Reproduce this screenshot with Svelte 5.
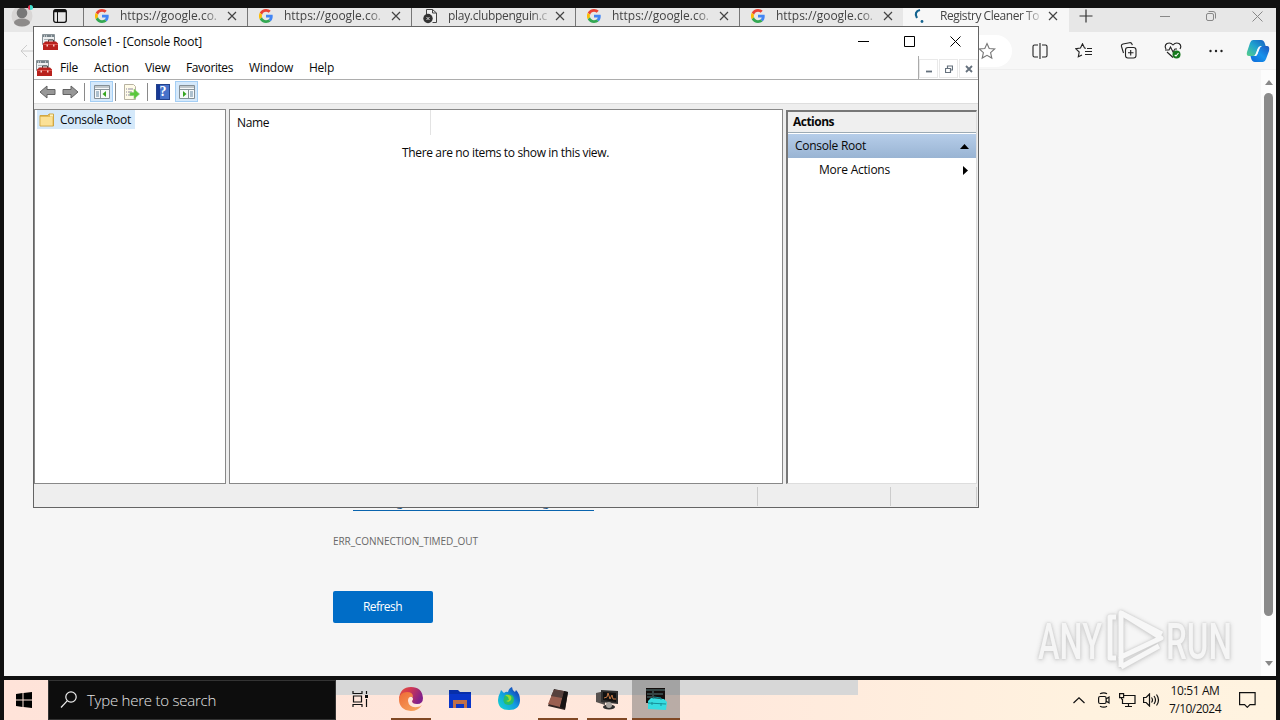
<script lang="ts">
type Tab = { title: string; icon: "google" | "blocked" | "spinner"; width: number; active?: boolean };

const tabs: Tab[] = [
    { title: "https://google.co.", icon: "google", width: 97 },
    { title: "https://google.co.", icon: "google", width: 97 },
    { title: "play.clubpenguin.c", icon: "blocked", width: 99 },
    { title: "https://google.co.", icon: "google", width: 97 },
    { title: "https://google.co.", icon: "google", width: 97 },
    { title: "Registry Cleaner To", icon: "spinner", width: 99, active: true },
];

const menus = [
    { label: "File", width: 18 },
    { label: "Action", width: 35 },
    { label: "View", width: 25 },
    { label: "Favorites", width: 47 },
    { label: "Window", width: 44 },
    { label: "Help", width: 25 },
];

// Spreads a label over a fixed advance width by adjusting its tracking.
function track(node: HTMLElement, width: number) {
    const count = (node.textContent ?? "").trim().length;
    const natural = node.getBoundingClientRect().width;
    node.style.letterSpacing = `${(width - natural) / count}px`;
}
</script>

{#snippet google()}
    <svg width="14" height="14" viewBox="0 0 48 48">
        <path fill="#ea4335" d="M24 9.5c3.5 0 6.700 1.200 9.200 3.600l6.900-6.900C35.900 2.400 30.500 0 24 0 14.600 0 6.500 5.400 2.600 13.200l8 6.200C12.400 13.700 17.700 9.500 24 9.500z" />
        <path fill="#4285f4" d="M47 24.500c0-1.600-.2-3.100-.4-4.500H24v9h12.900c-.6 3-2.300 5.500-4.800 7.200l7.700 6C44.400 38 47 31.800 47 24.500z" />
        <path fill="#fbbc05" d="M10.500 28.600a14.500 14.500 0 0 1 0-9.200l-8-6.200a24 24 0 0 0 0 21.600z" />
        <path fill="#34a853" d="M24 48c6.500 0 11.900-2.100 15.900-5.800l-7.700-6c-2.200 1.500-4.900 2.300-8.200 2.300-6.300 0-11.600-4.200-13.500-9.900l-8 6.200C6.500 42.600 14.600 48 24 48z" />
    </svg>
{/snippet}

{#snippet toolbox()}
    <svg width="16" height="16" viewBox="0 0 16 16">
        <path d="M.5.500h12v10H.500z" fill="#eef0f1" stroke="#8b9499" />
        <path d="M1 1h11v2H1z" fill="#77838a" />
        <path d="M2 2h1m1 0h1m4 0h1" stroke="#fff" />
        <path d="M2 5.500h9M2 8h3" stroke="#a9b3b8" />
        <path d="M6.500 8V6h5v2" fill="none" stroke="#444" />
        <path d="M1 9.500L3.500 7.500H14L16 9.500V16H1z" fill="#b8211d" />
        <path d="M1.500 10.500H16" stroke="#df514a" />
        <path d="M4.500 10.500h1.500v2H4.500zm6.500 0h1.500v2H11z" fill="#f5cbc7" />
    </svg>
{/snippet}

{#snippet pane(flip: boolean)}
    <svg width="16" height="14" viewBox="0 0 16 14">
        <path d="M.5.500h15v13H.500z" fill="#f7f9fa" stroke="#848f96" />
        <path d="M1 2h14M1 4.500h14" stroke="#8a969c" />
        <g transform={flip ? "translate(16 0) scale(-1 1)" : undefined}>
            <path d="M6.500 5v8.500" stroke="#848f96" />
            <path d="M2 7h3M2 9h3M2 11h3" stroke="#6589a4" />
            <path d="M12 6v6L8.500 9z" fill="#35a51f" />
        </g>
    </svg>
{/snippet}

<div class="desktop">
    <div class="browser">
        <div class="tabstrip">
            <div class="profile">
                <svg width="24" height="24" viewBox="0 0 24 24">
                    <circle cx="11" cy="8" r="10.500" fill="#d8d6d5" />
                    <circle cx="11" cy="5" r="5.300" fill="#777" />
                    <ellipse cx="11" cy="14.500" rx="8" ry="4" fill="#8d8b8a" />
                </svg>
                <svg width="14" height="14" viewBox="0 0 14 14" fill="none" stroke="#111">
                    <rect x=".7" y=".7" width="12.600" height="12.600" rx="2" stroke-width="1.300" />
                    <path d="M1 2h12" stroke-width="2.500" />
                    <path d="M4.500 3v10" />
                </svg>
            </div>
            {#each tabs as tab}
                <div class="tab" class:active={tab.active}>
                    <span class="favicon">
                        {#if tab.icon === "google"}
                            {@render google()}
                        {:else if tab.icon === "blocked"}
                            <svg width="16" height="16" viewBox="0 0 16 16">
                                <path d="M3.500 6V1.500h6L13.500 5v9.500H9.500M9.500 1.500V5h4" fill="#eee" stroke="#444" />
                                <circle cx="5" cy="10.500" r="4.700" fill="#333" />
                                <path d="M3.500 9l3 3m0-3l-3 3" stroke="#ddd" />
                            </svg>
                        {:else}
                            <svg width="14" height="16" viewBox="0 0 14 16">
                                <path d="M7 2C3 3 1.500 6 4 10" fill="none" stroke="#14638f" stroke-width="2.200" />
                                <circle cx="9" cy="13.500" r="1.400" fill="#14638f" />
                            </svg>
                        {/if}
                    </span>
                    <span class="tab-title"><span use:track={tab.width}>{tab.title}</span></span>
                    <svg class="tab-close" width="10" height="10" viewBox="0 0 10 10" stroke="#444" stroke-width="1.200"><path d="M1 1l8 8M9 1L1 9" /></svg>
                </div>
            {/each}
            <svg class="new-tab" width="14" height="14" viewBox="0 0 14 14" stroke="#333" stroke-width="1.200"><path d="M7 .5v13M.500 7h13" /></svg>
            <div class="browser-controls">
                <svg width="10" height="10" viewBox="0 0 10 10"><path d="M0 5.500h10" /></svg>
                <svg width="10" height="10" viewBox="0 0 10 10"><rect x=".5" y="2.500" width="7" height="7" rx="1.500" /><path d="M2.500 .5H7a2.500 2.500 0 0 1 2.500 2.500v4.500" /></svg>
                <svg width="11" height="11" viewBox="0 0 11 11"><path d="M.5.500l10 10M10.500.500l-10 10" /></svg>
            </div>
        </div>

        <div class="navbar">
            <svg class="back" width="16" height="14" viewBox="0 0 16 14"><path d="M7 1L1 7l6 6M1 7h15" /></svg>
            <div class="address">
                <svg width="18" height="18" viewBox="0 0 18 18" fill="none" stroke="#777" stroke-width="1.100"><path d="M9 1.500l2.200 5 5.500.500-4.100 3.700 1.200 5.400L9 13.300l-4.800 2.800 1.200-5.400L1.300 7l5.500-.500z" /></svg>
            </div>
            <div class="nav-tools">
                <svg width="16" height="16" viewBox="0 0 16 16"><path d="M6 2H2.500Q1 2 1 3.500v9Q1 14 2.500 14H6M10 2h3.500Q15 2 15 3.500v9q0 1.500-1.500 1.500H10M8 0v16" /></svg>
                <svg width="18" height="16" viewBox="0 0 18 16"><path d="M11 5.200L9.500 5 7.500 .8l-2 4.200-4.800.700L4.200 9l-.9 4.800L7 12M12 5.500h5M10 8.500h7M10 11.500h7" /></svg>
                <svg width="17" height="17" viewBox="0 0 17 17"><rect x="5.500" y="5.500" width="10.500" height="10.500" rx="2.500" /><path d="M10.700 8v5.500M8 10.700h5.500M3.500 11L1.500 4.500Q1 2.500 3 2L9.500.700q2-.3 2.500 1.500l.3 1" /></svg>
                <svg width="18" height="17" viewBox="0 0 18 17"><path d="M2 7Q0 3.500 3 1.500 6.500 0 9 3q2.500-3 6-1.500 3 2 1 5.500M1 8h4l1.500-3 2.500 5 2-3h2M3 10l6 5.500" /><circle cx="12.500" cy="12.500" r="4" fill="#16791d" stroke="none" /><path d="M10.700 13l1.300 1 2.500-3" stroke="#fff" /></svg>
                <svg width="14" height="4" viewBox="0 0 14 4"><g fill="#222" stroke="none"><circle cx="1.500" cy="2" r="1.200" /><circle cx="7" cy="2" r="1.200" /><circle cx="12.500" cy="2" r="1.200" /></g></svg>
            </div>
            <svg class="copilot" width="24" height="24" viewBox="0 0 24 24">
                <defs>
                    <linearGradient id="cp1" x1="0" y1="1" x2="1" y2="0"><stop offset="0" stop-color="#57cf87" /><stop offset=".5" stop-color="#20a4cf" /><stop offset="1" stop-color="#155ac3" /></linearGradient>
                    <linearGradient id="cp2" x1="1" y1="0" x2="0" y2="1"><stop offset="0" stop-color="#1b55bd" /><stop offset=".5" stop-color="#1793ec" /><stop offset="1" stop-color="#0b67d8" /></linearGradient>
                </defs>
                <path d="M7 1h8q3 0 4 4l1 3h-5q-3 0-4 4l-1 3q-1 2-3 2H3q-3 0-2-4L4 4q1-3 3-3z" fill="url(#cp1)" />
                <path d="M17 23H9q-3 0-4-4l-.5-2H9q2 0 3-4l1-3q1-3 4-3h4q3 0 2 5l-3 8q-1 3-3 3z" fill="url(#cp2)" />
                <path d="M11.500 10q1-3 3.500-3h1q-2 1-2.500 3l-2 5q-.5 2-2.500 2h-.5l1.500-3z" fill="#f7fbff" />
            </svg>
        </div>

        <div class="page">
            <div class="error">
                <div class="link"><span use:track={240}>Running Windows Network Diagnostics</span></div>
                <div class="code"><span use:track={145}>ERR_CONNECTION_TIMED_OUT</span></div>
                <button><span use:track={39}>Refresh</span></button>
            </div>
            <div class="scrollbar">
                <i class="up"></i>
                <div class="thumb"></div>
                <i class="down"></i>
            </div>
            <svg class="watermark" width="200" height="66" viewBox="0 0 200 66">
                <g class="mark">
                    <text x="3" y="52" textLength="64" lengthAdjust="spacingAndGlyphs">ANY</text>
                    <text x="131" y="52" textLength="66" lengthAdjust="spacingAndGlyphs">RUN</text>
                    <path d="M86 6v44l40-19z" />
                    <path d="M81 10h-6v41h6M86 6l41 21M86 60l38-21M86 50v10" />
                </g>
            </svg>
        </div>
    </div>

    <div class="console">
        <header class="titlebar">
            {@render toolbox()}
            <span class="caption"><span use:track={139}>Console1 - [Console Root]</span></span>
            <div class="window-controls">
                <svg width="11" height="11" viewBox="0 0 11 11"><path d="M0 5.500h11" /></svg>
                <svg width="11" height="11" viewBox="0 0 11 11"><path d="M.5.500h10v10H.500z" /></svg>
                <svg width="11" height="11" viewBox="0 0 11 11"><path d="M.5.500l10 10M10.500.500l-10 10" /></svg>
            </div>
        </header>

        <nav class="menubar">
            {@render toolbox()}
            {#each menus as menu}
                <span class="menu"><span use:track={menu.width}>{menu.label}</span></span>
            {/each}
            <div class="child-controls">
                <span><svg width="8" height="8" viewBox="0 0 8 8"><path d="M1 6.500h6" /></svg></span>
                <span><svg width="8" height="8" viewBox="0 0 8 8"><path d="M.5 3.500h5v4h-5zM2.500 3V1h5v4H6" stroke-width="1.200" /></svg></span>
                <span><svg width="8" height="8" viewBox="0 0 8 8"><path d="M1 1l6 6M7 1L1 7" /></svg></span>
            </div>
        </nav>

        <div class="toolbar">
            <svg width="17" height="14" viewBox="0 0 17 14"><path d="M1 7l7-6v3.500h8v5H8V13z" fill="#979797" stroke="#626262" /></svg>
            <svg class="forward" width="17" height="14" viewBox="0 0 17 14"><path d="M16 7L9 1v3.500H1v5h8V13z" fill="#979797" stroke="#626262" /></svg>
            <i class="rule first"></i>
            <span class="tool pressed">{@render pane(false)}</span>
            <i class="rule second"></i>
            <svg class="export" width="17" height="16" viewBox="0 0 17 16">
                <path d="M1.500.500h9l2 2v13h-11z" fill="#fffbe8" stroke="#b7b2a1" />
                <path d="M3 5h1m1 0h5M3 8h1m1 0h4M3 11h1m1 0h5" stroke="#8c88a0" />
                <path d="M7 8.500h4V5l5.500 5-5.500 5v-3.500H7z" fill="#5cc83c" stroke="#89cf73" stroke-width=".6" />
            </svg>
            <i class="rule third"></i>
            <span class="help">?</span>
            <span class="tool pressed last">{@render pane(true)}</span>
        </div>

        <div class="panes">
            <section class="tree">
                <div class="node">
                    <svg width="16" height="14" viewBox="0 0 16 14">
                        <path d="M1 2.500h8l1-1.500h4.500v12H1z" fill="#e5bd59" stroke="#cfa645" />
                        <path d="M1.500 4h12v8.500h-12z" fill="#fbe196" />
                        <path d="M11 1.500h3v2h-3z" fill="#fdf2bd" />
                    </svg>
                    <span use:track={71}>Console Root</span>
                </div>
            </section>
            <section class="list">
                <div class="column"><span use:track={32}>Name</span></div>
                <p><span use:track={207}>There are no items to show in this view.</span></p>
            </section>
            <section class="actions">
                <h2><span use:track={41}>Actions</span></h2>
                <div class="group"><span use:track={71}>Console Root</span><svg width="9" height="5" viewBox="0 0 9 5"><path d="M0 5h9L4.500 0z" /></svg></div>
                <div class="item"><span use:track={71}>More Actions</span><svg width="5" height="9" viewBox="0 0 5 9"><path d="M0 0v9l5-4.500z" /></svg></div>
            </section>
        </div>
        <footer><span class="message"></span><span class="progress"></span><span class="state"></span></footer>
    </div>

    <div class="taskbar">
        <div class="start">
            <svg width="16" height="16" viewBox="0 0 16 16"><path d="M0 2l6.500-.9v6.400H0zM7.500 1L16 0v7.500H7.500zM0 8.500h6.500v6.400L0 14zM7.500 8.500H16V16l-8.500-1z" /></svg>
        </div>
        <div class="search">
            <svg width="18" height="18" viewBox="0 0 18 18" fill="none" stroke="#eee" stroke-width="1.200"><circle cx="11" cy="6" r="5.200" /><path d="M7.200 9.800L1 16.500" /></svg>
            <span use:track={129}>Type here to search</span>
        </div>
        <div class="task view">
            <svg width="17" height="16" viewBox="0 0 17 16" fill="none" stroke="#111" stroke-width="1.200"><path d="M1 0v2.500h9V0M1.500 5h8v6h-8zM1 16v-2.500h9V16M14.500 0v3M14.500 8v8" /><path d="M13 4h3v3h-3z" fill="#111" stroke="none" /></svg>
        </div>
        <div class="task open">
            <svg width="26" height="26" viewBox="0 0 26 26">
                <defs>
                    <linearGradient id="edge" x1="0" y1="0" x2="1" y2=".4"><stop offset="0" stop-color="#e4573a" /><stop offset=".45" stop-color="#d23852" /><stop offset="1" stop-color="#82218a" /></linearGradient>
                    <linearGradient id="wave" x1="0" y1="0" x2="1" y2="1"><stop offset="0" stop-color="#ee6a35" /><stop offset="1" stop-color="#f7ac62" /></linearGradient>
                </defs>
                <path d="M1 13Q2 1 13 1q11 0 12 11 0 6-6 6-5 0-5-3 2-2 0-4Q7 5 1 13z" fill="url(#edge)" />
                <path d="M1 13Q2 6 9 6q6 0 6 5-5-1-5 4 1 7 9 6 3 0 5-2-4 6-11 6Q1 24 1 13z" fill="url(#wave)" />
            </svg>
        </div>
        <div class="task">
            <svg width="22" height="20" viewBox="0 0 22 20"><path d="M0 1h9l2 2h11v16H0z" fill="#072fa9" /><path d="M0 5h22v14H0z" fill="#0936c9" /><path d="M4 11h14v8h-3v-4H7v4H4z" fill="#bf7049" /></svg>
        </div>
        <div class="task">
            <svg width="24" height="24" viewBox="0 0 24 24">
                <defs><linearGradient id="fox" x1="0" y1="1" x2="1" y2="0"><stop offset="0" stop-color="#17dccc" /><stop offset=".5" stop-color="#129be0" /><stop offset="1" stop-color="#1524a8" /></linearGradient></defs>
                <path d="M3 6l1-3 3 3q2-2 4-1 1-4 4-5 0 3 3 5l1-2q4 4 4 10 0 10-11 10T1 13q0-4 2-7z" fill="url(#fox)" />
                <path d="M8 8q9-2 9 5-1 7-9 4-3-3 0-9z" fill="#28bd69" /><path d="M8 8q8-1 6 5-2 3-5 1l3-1-1-3z" fill="#9bd92e" />
            </svg>
        </div>
        <div class="task open">
            <svg width="24" height="24" viewBox="0 0 24 24"><path d="M8 2l14 3-3 18-17-4z" fill="#302321" /><path d="M8 3l10 1-4 16-12-3z" fill="#9a5f50" /><path d="M8 3l10 1-2 7-11-2z" fill="#56413d" /><path d="M18 4l4 1-3 17-5-2z" fill="#171313" /></svg>
        </div>
        <div class="task open">
            <svg width="26" height="24" viewBox="0 0 26 24"><path d="M2 6l9-2v14l-9-3z" fill="#575250" /><path d="M7 3l17 1v13l-17-2z" fill="#303030" /><path d="M9 5l13 1v9l-13-2z" fill="#111" /><path d="M10 11l3-1 1-4 2 6 2-4 1 4h3" fill="none" stroke="#c47744" /><ellipse cx="15" cy="20" rx="6" ry="2.500" fill="#302f2f" /><circle cx="15" cy="18" r="3" fill="#aaa5a0" /></svg>
        </div>
        <div class="task open current">
            <svg width="24" height="24" viewBox="0 0 24 24"><path d="M2 1h19v15H2z" fill="#130d0c" /><path d="M2 3h19M3 7h5m2 0h9M3 10h5M9 4v8" stroke="#577d7c" /><path d="M4 14l3-3 13 1 3 3-1 8-18-1z" fill="#36dce0" /><path d="M9 12l1-2 7 1v2M4 16l18 1M8 15v3m9-2v3" fill="none" stroke="#168f98" /></svg>
        </div>
        <div class="tray">
            <svg class="chevron" width="12" height="7" viewBox="0 0 12 7"><path d="M.5 6L6 .8 11.500 6" /></svg>
            <svg class="meet" width="12" height="16" viewBox="0 0 12 16"><rect x=".6" y="4.500" width="7.500" height="7" rx="1.500" /><path d="M8 7l3-2v6L8 9M2 1.800q4-2 7 0M2 14.200q4 2 7 0" /></svg>
            <svg class="network" width="17" height="14" viewBox="0 0 17 14"><path d="M5 2.500h11v8H3.500V6M9.500 11v2.500M6 13.500h7M.6.600h4v4h-4zM2.600 4.500v2" /></svg>
            <svg width="17" height="14" viewBox="0 0 17 14"><path d="M.6 4.500h2.500L6.500 1v12L3.100 9.500H.600zM8.500 4.500q2 2.500 0 5M11 3q3 4 0 8M13.500 1.500q4 5.500 0 11" /></svg>
            <div class="clock"><span use:track={49}>10:51 AM</span><br /><span use:track={52}>7/10/2024</span></div>
            <svg width="17" height="16" viewBox="0 0 17 16"><path d="M.6.600h15.500v12H11l-2.700 2.700L5.600 12.600h-5z" /></svg>
        </div>
    </div>

    <div class="preview-strip"></div>
    <i class="status-dot"></i>
</div>

<style>
:global(body) {
    overflow: hidden;
}

.desktop {
    position: relative;
    display: flex;
    flex-direction: column;
    box-sizing: border-box;
    width: 1280px;
    height: 720px;
    padding: 8px 4px 0;
    overflow: hidden;
    background: #111;
    color: #111;
    font: 12px/16px "Open Sans", "Noto Sans", sans-serif;
    white-space: nowrap;
}

svg {
    display: block;
    flex: none;
}

.browser {
    display: flex;
    flex-direction: column;
    height: 668px;
    background: #f6f6f6;
}

.tabstrip {
    display: flex;
    flex: 0 0 24px;
    background: #e7e7e7;
}

.profile {
    display: flex;
    width: 79px;
    padding-left: 7px;
    box-sizing: border-box;
    gap: 18px;
}

.profile svg + svg {
    margin-top: 1px;
}

.tab {
    display: flex;
    flex: 0 0 164px;
    box-sizing: border-box;
    padding: 0 10px 8px 12px;
    align-items: center;
    border-left: 1px solid #777;
    color: #444;
}

.tab.active {
    flex-basis: 166px;
    padding-right: 11px;
    border-color: #f7f7f7;
    background: #f7f7f7;
}

.favicon {
    display: flex;
    width: 24px;
    align-items: center;
    margin-left: -1px;
}

.tab.active .favicon {
    margin-left: -3px;
    width: 26px;
}

.tab-title {
    width: 102px;
    margin-left: 1px;
    mask-image: linear-gradient(90deg, #000 82%, transparent 102%);
}

.tab-close {
    margin-left: auto;
}

.new-tab {
    margin: 1px 0 0 10px;
}

.browser-controls {
    display: flex;
    gap: 36px;
    margin: 3px 13px 0 auto;
    fill: none;
    stroke: #888;
}

.navbar {
    display: flex;
    flex: 0 0 38px;
    box-sizing: border-box;
    align-items: center;
    border-bottom: 1px solid #eee;
    background: #f7f7f7;
}

.back {
    margin-left: 16px;
    fill: none;
    stroke: #ccc;
}

.address {
    display: flex;
    width: 936px;
    height: 32px;
    margin-left: 40px;
    box-sizing: border-box;
    padding-right: 16px;
    border-radius: 16px;
    align-items: center;
    justify-content: flex-end;
    background: #fff;
}

.nav-tools {
    display: flex;
    gap: 27px;
    align-items: center;
    margin-left: 20px;
    fill: none;
    stroke: #222;
    stroke-width: 1.1;
}

.copilot {
    margin: 0 6px 0 auto;
}

.page {
    position: relative;
    display: flex;
    flex: 1;
}

.error {
    padding: 424px 0 0 329px;
}

.link {
    width: 241px;
    margin-left: 20px;
    border-bottom: 1px solid #0964ae;
    color: #17578c;
}

.code {
    margin-top: 22px;
    color: #686868;
    font-size: 10px;
}

button {
    display: block;
    width: 100px;
    height: 32px;
    margin-top: 42px;
    padding: 0 1px 0 0;
    border: 0;
    border-radius: 2px;
    background: #006dc7;
    color: #fff;
    font: inherit;
}

.scrollbar {
    display: flex;
    flex-direction: column;
    width: 15px;
    margin-left: auto;
    align-items: center;
    background: #fcfcfc;
}

.up,
.down {
    border: 4px solid transparent;
}

.up {
    margin-top: 10px;
    border-top: 0;
    border-bottom: 5px solid #888;
}

.down {
    margin-top: 45px;
    border-bottom: 0;
    border-top: 5px solid #888;
}

.thumb {
    width: 9px;
    height: 523px;
    margin-top: 8px;
    border-radius: 5px;
    background: #8b8b8b;
}

.watermark {
    position: absolute;
    right: 41px;
    bottom: 3px;
    overflow: visible;
    filter: drop-shadow(0 0 1px #ccc) drop-shadow(0 1px 2px #ccc);
}

.mark {
    fill: #f5f5f5;
    font: 500 50px Roboto, sans-serif;
}

.mark path {
    fill: none;
    stroke: #f7f7f7;
    stroke-width: 5;
    stroke-linejoin: round;
}

.console {
    position: absolute;
    left: 33px;
    top: 26px;
    display: flex;
    flex-direction: column;
    width: 946px;
    height: 482px;
    box-sizing: border-box;
    border: 1px solid #646464;
    background: #eee;
    color: #080808;
}

.titlebar {
    display: flex;
    height: 29px;
    padding: 0 17px 0 8px;
    align-items: center;
    background: #fff;
}

.caption {
    margin-left: 5px;
}

.window-controls {
    display: flex;
    gap: 35px;
    margin-left: auto;
    fill: none;
    stroke: #000;
}

.menubar {
    display: flex;
    height: 23px;
    padding: 0 0 0 2px;
    align-items: center;
    border-bottom: 1px solid #adadad;
    background: #fff;
}

.menu {
    margin-left: 16px;
}

.menubar > svg + .menu {
    margin-left: 8px;
}

.child-controls {
    display: flex;
    margin-left: auto;
    align-self: stretch;
    border-left: 1px solid #aaa;
    gap: 1px;
}

.child-controls span {
    display: flex;
    width: 17px;
    height: 17px;
    margin-top: 3px;
    border: 1px solid #e9e9e9;
    box-sizing: content-box;
    align-items: center;
    justify-content: center;
    fill: none;
    stroke: #65717d;
    stroke-width: 1.8;
}

.toolbar {
    display: flex;
    height: 23px;
    padding-left: 5px;
    align-items: center;
    border-bottom: 1px solid #dedede;
    background: #fff;
}

.forward {
    margin-left: 6px;
}

.rule {
    width: 1px;
    height: 18px;
    background: #8a8a8a;
}

.first {
    margin: 0 5px 0 5px;
}

.second {
    margin: 0 7px 0 2px;
}

.third {
    margin: 0 8px 0 7px;
}

.tool {
    display: flex;
    width: 21px;
    height: 19px;
    border: 1px solid #a4cef4;
    align-items: center;
    justify-content: center;
    background: #d5e9fb;
}

.tool.last {
    margin-left: 5px;
}

.help {
    width: 12px;
    height: 14px;
    border: 1px solid #23428c;
    background: linear-gradient(90deg, #173995 25%, #4772ca 25%);
    color: #fff;
    font: bold 14px/14px "Liberation Serif", serif;
    text-align: center;
}

.panes {
    display: flex;
    height: 375px;
    padding: 5px 1px 0 0;
}

section {
    box-sizing: border-box;
    border: 1px solid #888;
    background: #fff;
}

.tree {
    width: 192px;
    padding: 0 2px;
}

.node {
    display: flex;
    width: 98px;
    height: 19px;
    box-sizing: border-box;
    padding-left: 2px;
    align-items: center;
    gap: 5px;
    background: #d5e9fa;
}

.list {
    width: 554px;
    margin-left: 3px;
}

.column {
    display: flex;
    width: 193px;
    height: 25px;
    padding-left: 7px;
    align-items: center;
    border-right: 1px solid #e3e3e3;
}

p {
    margin: 10px 0 0 172px;
}

.actions {
    width: 191px;
    margin: 1px 0 0 3px;
    border-width: 2px 1px 1px 2px;
    border-color: #777 #ddd #ddd #777;
}

h2 {
    height: 20px;
    margin: 0;
    padding-left: 5px;
    border-bottom: 1px solid #9caab4;
    background: #efefef;
    font-size: 12px;
    line-height: 20px;
}

.group,
.item {
    display: flex;
    height: 24px;
    align-items: center;
    justify-content: space-between;
    padding: 0 7px;
}

.group {
    margin-top: 1px;
    background: linear-gradient(#b6cde9, #99b4d3);
}

.item {
    padding: 0 8px 0 31px;
}

footer {
    display: flex;
    flex: 1;
    padding: 3px 1px 1px 0;
}

footer span {
    border-right: 1px solid #ccc;
}

.message {
    width: 723px;
}

.progress {
    width: 132px;
}

.state {
    flex: 1;
}

.taskbar {
    display: flex;
    height: 40px;
    margin-top: 4px;
    background: linear-gradient(90deg, #ffe3d9, #ffe8dc 55%, #fff2df 85%, #fff3e0);
}

.start {
    display: flex;
    width: 44px;
    padding-right: 4px;
    box-sizing: border-box;
    align-items: center;
    justify-content: center;
}

.search {
    display: flex;
    width: 288px;
    box-sizing: border-box;
    padding-left: 11px;
    border: 1px solid #333;
    align-items: center;
    gap: 9px;
    background: #0d0d0d;
    color: #e5e5e5;
    font-size: 15px;
    font-weight: 300;
}

.task {
    position: relative;
    z-index: 1;
    display: flex;
    width: 40px;
    margin: 0 5px 0 4px;
    box-sizing: border-box;
    align-items: center;
    justify-content: center;
    border-bottom: 2px solid transparent;
}

.task.view {
    width: 48px;
    margin: 0 3px 0 0;
}

.task.open {
    border-color: #804824;
}

.task.current {
    width: 48px;
    margin: 0;
    background: rgb(100 100 100 / 45%);
}

.tray {
    display: flex;
    margin-left: auto;
    padding-right: 20px;
    align-items: center;
    fill: none;
    stroke: #111;
    stroke-width: 1.2;
}

.chevron {
    margin-right: 13px;
}

.meet {
    margin-right: 9px;
}

.network {
    margin-right: 7px;
}

.clock {
    width: 52px;
    margin: 0 18px 0 9px;
    line-height: 18px;
    text-align: center;
}

.preview-strip {
    position: absolute;
    left: 336px;
    top: 680px;
    width: 522px;
    height: 15px;
    background: #d7d7d7;
}

.status-dot {
    position: absolute;
    left: 28px;
    top: 5px;
    width: 5px;
    height: 5px;
    border-radius: 50%;
    background: linear-gradient(90deg, #ea3353 35%, #43dfce 35%);
}
</style>
